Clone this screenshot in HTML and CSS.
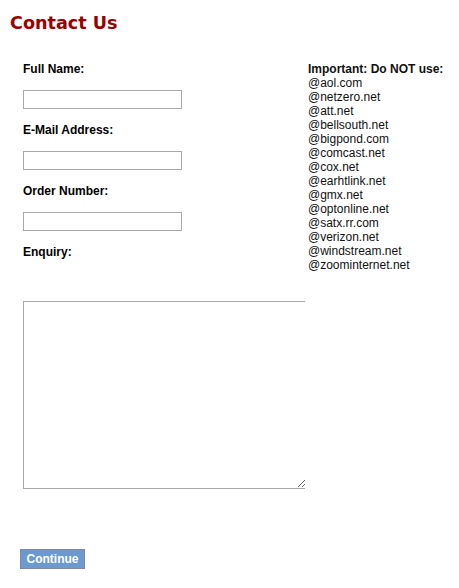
FILE: index.html
```html
<!DOCTYPE html>
<html>
<head>
<meta charset="utf-8">
<link rel="stylesheet" href="styles.css">
</head>
<body>
<h1 class="title">Contact Us</h1>
<div class="layout">
  <form class="form-col">
    <label class="field-label">Full Name:</label>
    <input class="text-input" type="text">
    <label class="field-label">E-Mail Address:</label>
    <input class="text-input" type="text">
    <label class="field-label">Order Number:</label>
    <input class="text-input" type="text">
    <label class="field-label">Enquiry:</label>
    <div class="textarea-clip"><textarea class="enquiry"></textarea></div>
    <button class="continue" type="button">Continue</button>
  </form>
  <div class="notice">
    <div class="notice-title">Important: Do NOT use:</div>
    <div>@aol.com</div>
    <div>@netzero.net</div>
    <div>@att.net</div>
    <div>@bellsouth.net</div>
    <div>@bigpond.com</div>
    <div>@comcast.net</div>
    <div>@cox.net</div>
    <div>@earhtlink.net</div>
    <div>@gmx.net</div>
    <div>@optonline.net</div>
    <div>@satx.rr.com</div>
    <div>@verizon.net</div>
    <div>@windstream.net</div>
    <div>@zoominternet.net</div>
  </div>
</div>
</body>
</html>
```
FILE: styles.css
```css
html, body {
  margin: 0;
  padding: 0;
  background: #fff;
}
body {
  font-family: "Liberation Sans", Arial, sans-serif;
  font-size: 12px;
  line-height: 14px;
  color: #000;
}
.title {
  margin: 0;
  padding: 10px 0 0 10px;
  height: 26px;
  font-family: "DejaVu Sans", Verdana, sans-serif;
  font-weight: bold;
  font-size: 17.6px;
  line-height: 26px;
  color: #990000;
}
.layout {
  display: flex;
  padding: 24px 0 0 23px;
}
.form-col {
  width: 282px;
  margin: 0;
  display: flex;
  flex-direction: column;
  align-items: flex-start;
}
.field-label {
  font-weight: bold;
  height: 14px;
  padding-top: 2px;
  margin-bottom: 14px;
}
.text-input {
  box-sizing: border-box;
  width: 159px;
  height: 19px;
  margin: 0 0 12px 0;
  padding: 0 2px;
  border: 1px solid #a9a9a9;
  background: #fff;
  font-family: inherit;
  font-size: 12px;
  outline: none;
}
.textarea-clip {
  width: 282px;
  overflow: hidden;
  margin-top: 28px;
  height: 188px;
}
.enquiry {
  display: block;
  box-sizing: border-box;
  width: 284px;
  height: 188px;
  margin: 0;
  padding: 2px;
  border: 1px solid #a9a9a9;
  background: #fff;
  font-family: inherit;
  font-size: 12px;
  outline: none;
}
.continue {
  margin: 60px 0 0 -3px;
  box-sizing: border-box;
  width: 65px;
  height: 20px;
  padding: 0;
  border: 1px solid #7f86a6;
  background: #6a9ad0;
  color: #fff;
  font-family: "Liberation Sans", Arial, sans-serif;
  font-weight: bold;
  font-size: 12px;
  line-height: 18px;
}
.notice {
  padding: 2px 0 0 3px;
  color: #111;
}
.notice-title {
  font-weight: bold;
}
```
